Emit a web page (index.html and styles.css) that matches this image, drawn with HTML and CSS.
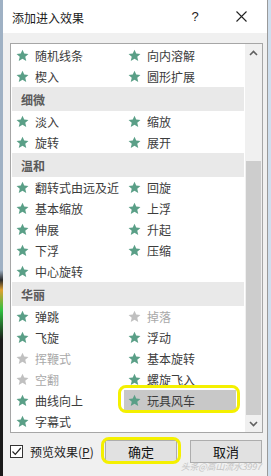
FILE: index.html
```html
<!DOCTYPE html>
<html lang="zh-CN">
<head>
<meta charset="utf-8">
<title>添加进入效果</title>
<link rel="stylesheet" href="styles.css">
</head>
<body>
<svg class="defs" width="0" height="0" aria-hidden="true">
  <symbol id="star" viewBox="0 0 24 24">
    <polygon points="12,1.2 15.2,8.4 23,9.1 17.1,14.3 18.9,22.2 12,18.1 5.1,22.2 6.9,14.3 1,9.1 8.8,8.4" fill="currentColor"/>
  </symbol>
</svg>
<div class="screen">
  <div class="edge-left"></div>
  <div class="win">
    <div class="titlebar">
      <span class="title">添加进入效果</span>
      <span class="help">?</span>
      <svg class="close" width="11" height="11" viewBox="0 0 11 11"><path d="M0.5 0.5 L10.5 10.5 M10.5 0.5 L0.5 10.5" stroke="#222" stroke-width="1.1" fill="none"/></svg>
    </div>
    <div class="body">
      <div class="listbox">
        <div class="list">
          <div class="row">
            <div class="item"><svg class="star"><use href="#star"/></svg><span>随机线条</span></div>
            <div class="item"><svg class="star"><use href="#star"/></svg><span>向内溶解</span></div>
          </div>
          <div class="row">
            <div class="item"><svg class="star"><use href="#star"/></svg><span>楔入</span></div>
            <div class="item"><svg class="star"><use href="#star"/></svg><span>圆形扩展</span></div>
          </div>
          <div class="group">细微</div>
          <div class="row">
            <div class="item"><svg class="star"><use href="#star"/></svg><span>淡入</span></div>
            <div class="item"><svg class="star"><use href="#star"/></svg><span>缩放</span></div>
          </div>
          <div class="row">
            <div class="item"><svg class="star"><use href="#star"/></svg><span>旋转</span></div>
            <div class="item"><svg class="star"><use href="#star"/></svg><span>展开</span></div>
          </div>
          <div class="group">温和</div>
          <div class="row">
            <div class="item"><svg class="star"><use href="#star"/></svg><span>翻转式由远及近</span></div>
            <div class="item"><svg class="star"><use href="#star"/></svg><span>回旋</span></div>
          </div>
          <div class="row">
            <div class="item"><svg class="star"><use href="#star"/></svg><span>基本缩放</span></div>
            <div class="item"><svg class="star"><use href="#star"/></svg><span>上浮</span></div>
          </div>
          <div class="row">
            <div class="item"><svg class="star"><use href="#star"/></svg><span>伸展</span></div>
            <div class="item"><svg class="star"><use href="#star"/></svg><span>升起</span></div>
          </div>
          <div class="row">
            <div class="item"><svg class="star"><use href="#star"/></svg><span>下浮</span></div>
            <div class="item"><svg class="star"><use href="#star"/></svg><span>压缩</span></div>
          </div>
          <div class="row">
            <div class="item"><svg class="star"><use href="#star"/></svg><span>中心旋转</span></div>
          </div>
          <div class="group">华丽</div>
          <div class="row">
            <div class="item"><svg class="star"><use href="#star"/></svg><span>弹跳</span></div>
            <div class="item disabled"><svg class="star"><use href="#star"/></svg><span>掉落</span></div>
          </div>
          <div class="row">
            <div class="item"><svg class="star"><use href="#star"/></svg><span>飞旋</span></div>
            <div class="item"><svg class="star"><use href="#star"/></svg><span>浮动</span></div>
          </div>
          <div class="row">
            <div class="item disabled"><svg class="star"><use href="#star"/></svg><span>挥鞭式</span></div>
            <div class="item"><svg class="star"><use href="#star"/></svg><span>基本旋转</span></div>
          </div>
          <div class="row">
            <div class="item disabled"><svg class="star"><use href="#star"/></svg><span>空翻</span></div>
            <div class="item"><svg class="star"><use href="#star"/></svg><span>螺旋飞入</span></div>
          </div>
          <div class="row">
            <div class="item"><svg class="star"><use href="#star"/></svg><span>曲线向上</span></div>
            <div class="item selected marked"><svg class="star"><use href="#star"/></svg><span>玩具风车</span></div>
          </div>
          <div class="row">
            <div class="item"><svg class="star"><use href="#star"/></svg><span>字幕式</span></div>
          </div>
        </div>
        <div class="scrollbar">
          <div class="arrow"><svg width="9" height="6" viewBox="0 0 9 6"><path d="M1 5 L4.5 1.5 L8 5" stroke="#606060" stroke-width="1.6" fill="none"/></svg></div>
          <div class="track"><div class="thumb"></div></div>
          <div class="arrow"><svg width="9" height="6" viewBox="0 0 9 6"><path d="M1 1 L4.5 4.5 L8 1" stroke="#606060" stroke-width="1.6" fill="none"/></svg></div>
        </div>
      </div>
      <div class="footer">
        <label class="check">
          <span class="box"><svg width="11" height="11" viewBox="0 0 11 11"><path d="M1.5 5.5 L4.3 8.3 L9.8 2" stroke="#222" stroke-width="1.2" fill="none"/></svg></span>
          <span class="check-label">预览效果(<u>P</u>)</span>
        </label>
        <div class="buttons">
          <button class="btn marked">确定</button>
          <button class="btn">取消</button>
        </div>
      </div>
    </div>
    <div class="watermark">头条@高山流水3997</div>
  </div>
  <div class="edge-right"></div>
</div>
</body>
</html>
```
FILE: styles.css
```css
* { box-sizing: border-box; }
html, body { margin: 0; padding: 0; }
body {
  width: 271px;
  height: 476px;
  overflow: hidden;
  font-family: "Noto Sans CJK SC", "Noto Sans", "Liberation Sans", sans-serif;
  background: #d9e5f0;
}
.defs { position: absolute; }
.screen {
  display: flex;
  width: 271px;
  height: 476px;
}
.edge-left {
  width: 3px;
  background: linear-gradient(#9fb1c4 0, #9fb1c4 270px, #2a2a2a 280px, #e0a030 290px, #30c040 310px, #1a1a1a 340px, #1a1a1a 476px);
}
.edge-right {
  width: 3px;
  background: #cfdfee;
}
.win {
  position: relative;
  width: 265px;
  height: 476px;
  background: #f0f0f0;
  border-right: 1px solid #9a9a9a;
  display: flex;
  flex-direction: column;
}
.titlebar {
  height: 33px;
  background: #ffffff;
  display: flex;
  align-items: center;
  padding-left: 9px;
  flex: none;
}
.title {
  font-size: 12px;
  color: #1a1a1a;
  flex: 1;
  padding-top: 1px;
}
.help {
  font-family: "Liberation Sans", sans-serif;
  font-size: 13px;
  color: #222;
  width: 12px;
  text-align: center;
  margin-right: 35px;
}
.close {
  margin-right: 20px;
}
.body {
  flex: 1;
  padding: 10px 5px 0 7px;
  display: flex;
  flex-direction: column;
}
.listbox {
  width: 253px;
  height: 390px;
  border: 1px solid #a6a6a6;
  background: #ffffff;
  display: flex;
  flex: none;
}
.list {
  width: 234px;
  padding-top: 1px;
  overflow: hidden;
  display: flex;
  flex-direction: column;
}
.row {
  display: flex;
  height: 21px;
  padding-left: 1px;
  flex: none;
}
.item {
  position: relative;
  width: 112px;
  height: 21px;
  display: flex;
  align-items: center;
  padding-left: 4px;
  gap: 6px;
  font-size: 12px;
  color: #3c3c3c;
  white-space: nowrap;
}
.star {
  width: 13px;
  height: 13px;
  color: #5a9f87;
  flex: none;
}
.item.disabled { color: #a9a9a9; }
.item.disabled .star { color: #c0c0c0; }
.item.selected {
  background: #c8c8c8;
}
.marked::after {
  content: "";
  position: absolute;
  border: 3px solid #f4f000;
  border-radius: 8px;
  pointer-events: none;
}
.item.marked::after {
  left: -6px;
  right: -4px;
  top: -5px;
  bottom: -2px;
}
.group {
  height: 24px;
  margin: 0 1px;
  background: #e9e9e9;
  display: flex;
  align-items: center;
  padding-left: 9px;
  font-size: 12px;
  font-weight: bold;
  color: #5a5a5a;
  flex: none;
}
.scrollbar {
  width: 17px;
  background: #f0f0f0;
  display: flex;
  flex-direction: column;
}
.arrow {
  height: 17px;
  display: flex;
  align-items: center;
  justify-content: center;
  flex: none;
}
.track {
  flex: 1;
  padding-top: 100px;
  display: flex;
  flex-direction: column;
}
.thumb {
  flex: 1;
  margin: 0 1px;
  background: #cdcdcd;
}
.footer {
  display: flex;
  align-items: center;
  padding-top: 7px;
  height: 30px;
}
.check {
  display: flex;
  align-items: center;
  gap: 7px;
}
.box {
  width: 13px;
  height: 13px;
  border: 1px solid #333;
  background: #fff;
  display: flex;
  align-items: center;
  justify-content: center;
}
.check-label {
  font-size: 12px;
  color: #222;
}
.buttons {
  margin-left: auto;
  display: flex;
  gap: 13px;
}
.btn {
  position: relative;
  width: 72px;
  height: 23px;
  background: #e1e1e1;
  border: 1px solid #adadad;
  font-family: "Noto Sans CJK SC", sans-serif;
  font-size: 13px;
  color: #111;
  padding: 0;
}
.btn.marked::after {
  left: -5px;
  right: -5px;
  top: -4px;
  bottom: -2px;
}
.watermark {
  position: absolute;
  right: 6px;
  bottom: 3px;
  font-size: 9px;
  color: #c4c4c4;
  font-style: italic;
  letter-spacing: -0.2px;
}
```
